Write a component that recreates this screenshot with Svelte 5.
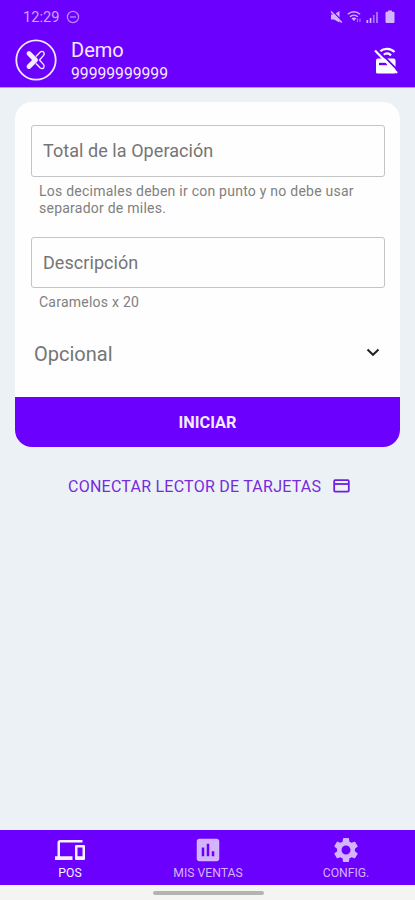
<script>
  let fields = [
    {
      label: "Total de la Operación",
      lines: ["Los decimales deben ir con punto y no debe usar", "separador de miles."]
    },
    { label: "Descripción", lines: ["Caramelos x 20"] }
  ];
  let tabs = [
    { id: "pos", label: "POS" },
    { id: "sales", label: "MIS VENTAS" },
    { id: "config", label: "CONFIG." }
  ];
  let active = "pos";
</script>

<div class="screen">
  <header>
    <div class="status">
      <span class="time">12:29</span>
      <svg class="dnd" width="14" height="14" viewBox="0 0 14 14">
        <circle cx="7" cy="7" r="5.6" />
        <path d="M4 7h6" />
      </svg>
      <div class="signals">
        <svg width="13" height="14" viewBox="0 0 13 14">
          <path class="fill" d="M1 4.500h3L9.500 1v11.500L4 9.500H1z" />
          <path class="cut" d="M2.200.8l10 10.500" />
          <path class="line" d="M1 1.500l10.800 11" />
        </svg>
        <svg width="15" height="14" viewBox="0 0 15 14">
          <path class="line" d="M.8 4.300c3.600-3.400 8.600-3.400 12.200 0M3 6.800c2.300-2.200 5.500-2.200 7.800 0" />
          <path class="fill" d="M4.400 8.300c1.400-1.200 3.600-1.200 5 0L7 11z" />
          <path class="thin" d="M10.500 8.500v3.500M13 12V8.500" />
        </svg>
        <svg width="13" height="14" viewBox="0 0 13 14">
          <path class="fill" d="M.5 10h1.700v3H.5zM3.700 8h1.700v5H3.700z" />
          <path class="fill dim" d="M6.900 5h1.700v8H6.900zM10 2h2v11h-2z" />
        </svg>
        <svg class="battery" width="10" height="14" viewBox="0 0 10 14">
          <path class="fill" d="M3 .5h4v1.300h1.500q1 0 1 1V12q0 1-1 1h-7q-1 0-1-1V2.800q0-1 1-1H3z" />
        </svg>
      </div>
    </div>
    <div class="account">
      <svg class="logo" width="42" height="42" viewBox="0 0 42 42">
        <circle cx="21" cy="21" r="19.700" />
        <path class="thick" d="M14 14.500L20.500 21L14 27.500M14 14.500l6 6" />
        <path class="outline" d="M21 17.500l4.300-4.500q1.700-1.300 3.300.1 1.300 1.700 0 3.300L24.500 21l4.100 4.600q1.300 1.600 0 3.300-1.600 1.400-3.300.1L21 24.500" />
      </svg>
      <div class="who">
        <span class="name">Demo</span>
        <span class="number">99999999999</span>
      </div>
      <svg class="reader" width="24" height="28" viewBox="0 0 24 28">
        <path class="wave" d="M6 4.500C10 .8 16.500.8 20.500 5M9.500 8c2.300-2 5.200-2 7.500.4" />
        <path class="body" d="M4 11.500h15.500q2 0 2 2V25q0 1.500-1.500 1.500H3.500Q2 26.500 2 25V13.500q0-2 2-2z" />
        <path class="slot" d="M5 17h8" />
        <path class="gap" d="M2.800 1.800l21 21.500" />
        <path class="slash" d="M1 3.500L23 26" />
      </svg>
    </div>
  </header>

  <main>
    <section class="card">
      <div class="form">
        {#each fields as field}
          <div class="field">
            <div class="box">{field.label}</div>
            <div class="helper">
              {#each field.lines as line}
                <p>{line}</p>
              {/each}
            </div>
          </div>
        {/each}
        <div class="optional">
          <span>Opcional</span>
          <svg width="14" height="9" viewBox="0 0 14 9">
            <path d="M1.500 1.500L7 6.800l5.500-5.300" />
          </svg>
        </div>
      </div>
      <button class="start">INICIAR</button>
    </section>

    <button class="connect">
      <span>CONECTAR LECTOR DE TARJETAS</span>
      <svg width="17" height="14" viewBox="0 0 17 14">
        <rect x="1.200" y="1.200" width="14.600" height="11.400" rx="1" />
        <path d="M1 5h15" />
      </svg>
    </button>
  </main>

  <nav>
    {#each tabs as tab}
      <button class="tab" class:active={tab.id === active}>
        {#if tab.id === "pos"}
          <svg width="30" height="30" viewBox="0 0 24 24">
            <path d="M4 6h18V4H4c-1.100 0-2 .9-2 2v11H0v3h14v-3H4zM23 8h-6c-.55 0-1 .45-1 1v10c0 .55.45 1 1 1h6c.55 0 1-.45 1-1V9c0-.55-.45-1-1-1zm-1 9h-4v-7h4z" />
          </svg>
        {:else if tab.id === "sales"}
          <svg width="30" height="30" viewBox="0 0 24 24">
            <path d="M19 3H5c-1.100 0-2 .9-2 2v14c0 1.100.9 2 2 2h14c1.100 0 2-.9 2-2V5c0-1.100-.9-2-2-2zM9 17H7v-7h2zm4 0h-2V7h2zm4 0h-2v-4h2z" />
          </svg>
        {:else}
          <svg width="30" height="30" viewBox="0 0 24 24">
            <path d="M19.140 12.940c.04-.3.060-.61.060-.94 0-.32-.02-.64-.07-.94l2.030-1.580c.18-.14.23-.41.12-.61l-1.920-3.320c-.12-.22-.37-.29-.59-.22l-2.390.96c-.5-.38-1.030-.7-1.620-.94l-.36-2.540c-.04-.24-.24-.41-.48-.41h-3.840c-.24 0-.43.17-.47.41l-.36 2.540c-.59.24-1.130.57-1.620.94l-2.390-.96c-.22-.08-.47 0-.59.22L2.740 8.870c-.12.21-.08.47.12.61l2.030 1.580c-.05.3-.09.63-.09.94s.02.64.07.94l-2.030 1.580c-.18.14-.23.41-.12.61l1.920 3.320c.12.22.37.29.59.22l2.390-.96c.5.38 1.030.7 1.620.94l.36 2.540c.05.24.24.41.48.41h3.840c.24 0 .44-.17.47-.41l.36-2.540c.59-.24 1.130-.56 1.620-.94l2.390.96c.22.08.47 0 .59-.22l1.920-3.320c.12-.22.07-.47-.12-.61zM12 15.600c-1.980 0-3.600-1.620-3.600-3.600s1.620-3.600 3.600-3.600 3.600 1.620 3.600 3.600-1.620 3.600-3.600 3.600z" />
          </svg>
        {/if}
        <span>{tab.label}</span>
      </button>
    {/each}
  </nav>
  <div class="gesture"><div class="pill"></div></div>
</div>

<style>
  :global(body) {
    margin: 0;
  }
  .screen {
    display: flex;
    flex-direction: column;
    height: 900px;
    background: #ecf1f5;
    font-family: Roboto, "Liberation Sans", sans-serif;
    overflow: hidden;
  }
  svg {
    display: block;
    flex: none;
  }
  p {
    margin: 0;
  }
  button {
    border: 0;
    padding: 0;
    margin: 0;
    background: none;
    font-family: inherit;
  }
  header {
    height: 88px;
    flex: none;
    box-sizing: border-box;
    background: #6c00ff;
    color: #f3eaff;
    border-bottom: 1px solid #b895f0;
  }
  .status {
    display: flex;
    align-items: center;
    height: 34px;
    padding: 0 20px 0 23px;
  }
  .time {
    font-size: 14.7px;
    color: #caa5ff;
  }
  .dnd {
    margin-left: 6px;
    fill: none;
    stroke: #b787ff;
    stroke-width: 1.3;
  }
  .signals {
    display: flex;
    gap: 4px;
    margin-left: auto;
  }
  .signals .battery {
    margin-left: 2px;
  }
  .fill {
    fill: #d4b3ff;
  }
  .dim {
    fill: #a66cff;
  }
  .line {
    fill: none;
    stroke: #d4b3ff;
    stroke-width: 1.4;
  }
  .thin {
    fill: none;
    stroke: #a66cff;
    stroke-width: 1.2;
  }
  .cut {
    stroke: #6c00ff;
    stroke-width: 1.4;
  }
  .account {
    display: flex;
    align-items: center;
    padding: 0 17px 0 15px;
    height: 53px;
  }
  .logo {
    fill: none;
    stroke: #f3eaff;
    stroke-width: 1.8;
    margin-bottom: 1px;
  }
  .logo .thick {
    stroke-width: 4.8;
    stroke-linecap: round;
    stroke-linejoin: round;
  }
  .logo .outline {
    stroke-width: 1.4;
  }
  .who {
    display: flex;
    flex-direction: column;
    margin: 2px 0 0 14px;
  }
  .name {
    font-size: 20px;
    line-height: 24px;
  }
  .number {
    font-size: 15.7px;
    line-height: 24px;
  }
  .reader {
    margin-left: auto;
  }
  .wave {
    fill: none;
    stroke: #fff;
    stroke-width: 2.3;
  }
  .body {
    fill: #fff;
  }
  .slot {
    stroke: #6c00ff;
    stroke-width: 2.4;
  }
  .gap {
    stroke: #6c00ff;
    stroke-width: 1.8;
  }
  .slash {
    stroke: #fff;
    stroke-width: 2.2;
  }
  main {
    flex: 1;
    padding: 14px 15px 0;
  }
  .card {
    background: #fefefe;
    border-radius: 17px;
    overflow: hidden;
  }
  .form {
    height: 295px;
    box-sizing: border-box;
    padding: 23px 15px 0 16px;
  }
  .field {
    height: 111.5px;
  }
  .box {
    display: flex;
    align-items: center;
    height: 51.5px;
    box-sizing: border-box;
    padding-left: 11px;
    border: 1px solid #c4c4c4;
    border-radius: 3px;
    font-size: 18px;
    letter-spacing: 0.06px;
    color: #757575;
  }
  .helper {
    padding: 6px 0 0 8px;
    font-size: 14px;
    line-height: 17px;
    letter-spacing: 0.24px;
    color: #808080;
    white-space: nowrap;
  }
  .optional {
    display: flex;
    align-items: center;
    justify-content: space-between;
    padding: 0 5px 0 3px;
    height: 24px;
    margin-top: -6px;
    font-size: 20px;
    color: #757575;
  }
  .optional svg {
    fill: none;
    stroke: #222;
    stroke-width: 2;
    margin-bottom: 4px;
  }
  .start {
    display: block;
    width: 100%;
    height: 50px;
    background: #6c00ff;
    color: #f3eaff;
    font-size: 16.3px;
    font-weight: 700;
  }
  .connect {
    display: flex;
    align-items: center;
    margin: 29px 0 0 53px;
    height: 20px;
    gap: 12px;
    font-size: 16px;
    letter-spacing: 0.24px;
    color: #762bdc;
    white-space: nowrap;
  }
  .connect svg {
    fill: none;
    stroke: #6f1fe0;
    stroke-width: 1.8;
  }
  nav {
    flex: none;
    display: grid;
    grid-template-columns: repeat(3, 1fr);
    height: 55px;
    padding-left: 1px;
    box-sizing: border-box;
    background: #6c00ff;
  }
  .tab {
    display: flex;
    flex-direction: column;
    align-items: center;
    justify-content: space-between;
    padding: 5px 0 4px;
    font-size: 12.2px;
    line-height: 15px;
    color: #d4b3ff;
  }
  .tab svg {
    fill: currentColor;
  }
  .tab.active {
    color: #f7f0ff;
  }
  .gesture {
    flex: none;
    display: flex;
    justify-content: center;
    height: 15px;
    box-sizing: border-box;
    padding: 6px 0 0 1px;
    background: #f4f4f3;
  }
  .pill {
    width: 111px;
    height: 4px;
    border-radius: 2px;
    background: #b3b3b3;
  }
</style>
